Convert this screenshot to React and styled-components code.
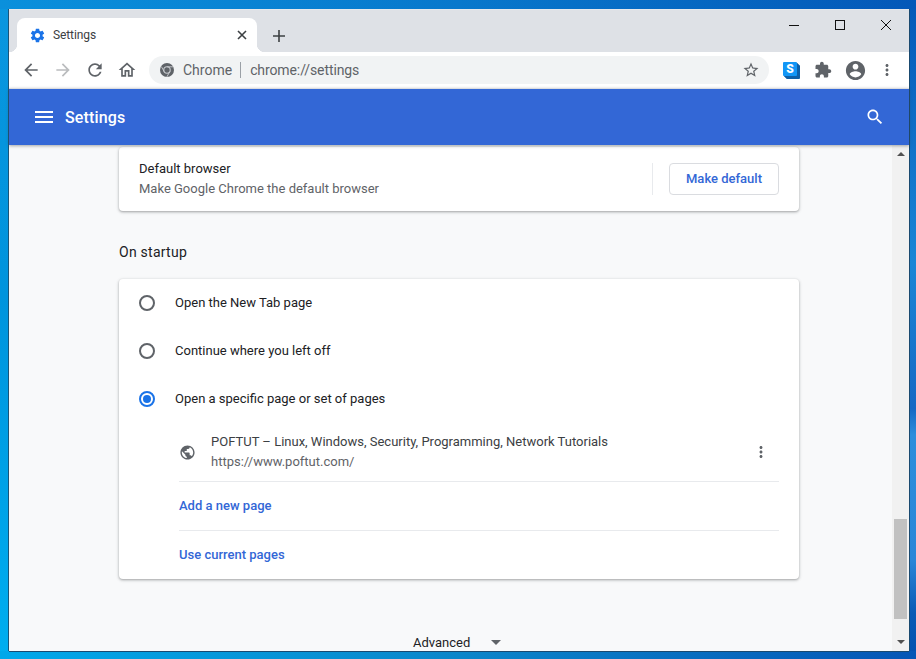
import React from 'react';
import styled, { createGlobalStyle } from 'styled-components';

const Global = createGlobalStyle`
  html, body { margin: 0; padding: 0; height: 659px; overflow: hidden; }
  body {
    background:
      linear-gradient(90deg, #0a90dc 0%, #0878cc 50%, #0458b8 100%) top / 100% 9px no-repeat,
      linear-gradient(90deg, #00a8ea 0%, #0b86ca 50%, #0556b6 100%) bottom / 100% 8px no-repeat,
      linear-gradient(180deg, #0a96df 0%, #0094dd 45%, #00aef0 100%) left / 9px 100% no-repeat,
      linear-gradient(180deg, #0458b8 0%, #1a86d6 40%, #1668c4 62%, #2c8edc 66%, #2a86d8 85%, #0a5ab5 93%, #0350b0 100%) right / 7px 100% no-repeat,
      #0878cc;
    font-family: Roboto, "Liberation Sans", sans-serif;
  }
  * { box-sizing: border-box; }
`;

const Desktop = styled.div`
  width: 916px;
  height: 659px;
  padding: 9px 7px 8px 9px;
`;
const Win = styled.div`
  width: 900px;
  height: 642px;
  display: flex;
  flex-direction: column;
  background: #fff;
  box-shadow: -1px 0 0 #1a5478, 1px 0 0 #1a4a70, 0 1px 0 #1a4a70;
`;
const TabStrip = styled.div`
  height: 43px;
  flex: none;
  display: flex;
  padding-left: 8px;
  background: #dee1e6;
  border-top: 1px solid #e6e8ec;
`;
const Tab = styled.div`
  position: relative;
  width: 240px;
  height: 34px;
  margin-top: 8px;
  display: flex;
  align-items: center;
  padding: 0 10px 0 12px;
  background: #fff;
  border-radius: 8px 8px 0 0;
  &::before, &::after {
    content: '';
    position: absolute;
    bottom: 0;
    width: 8px;
    height: 8px;
  }
  &::before { left: -8px; background: radial-gradient(circle at 0 0, transparent 8px, #fff 8.5px); }
  &::after { right: -8px; background: radial-gradient(circle at 100% 0, transparent 8px, #fff 8.5px); }
`;
const TabTitle = styled.span`
  flex: 1;
  margin-left: 7px;
  font-size: 12px;
  letter-spacing: -0.1px;
  color: #3c4043;
`;
const PlusButton = styled.div`
  width: 28px;
  height: 28px;
  margin: 12px 0 0 8px;
  display: flex;
  align-items: center;
  justify-content: center;
`;
const Spacer = styled.div`
  flex: 1;
`;
const WinButton = styled.div`
  width: 46px;
  height: 30px;
  display: flex;
  align-items: center;
  justify-content: center;
`;
const Toolbar = styled.div`
  height: 36px;
  flex: none;
  display: flex;
  align-items: center;
  padding: 0 6px;
  background: #fff;
`;
const ToolButton = styled.div`
  width: 32px;
  height: 32px;
  display: flex;
  align-items: center;
  justify-content: center;
`;
const Omnibox = styled.div`
  flex: 1;
  height: 28px;
  margin: 0 6px;
  padding: 0 9px 0 10px;
  display: flex;
  align-items: center;
  background: #f1f3f4;
  border-radius: 14px;
  font-size: 14px;
  color: #5f6368;
`;
const Origin = styled.span`
  margin-left: 8px;
`;
const UrlDivider = styled.span`
  width: 1px;
  height: 16px;
  margin: 0 9px 0 8px;
  background: #9aa0a6;
`;
const Url = styled.span`
  flex: 1;
  letter-spacing: -0.1px;
`;
const Header = styled.div`
  position: relative;
  z-index: 2;
  height: 57px;
  flex: none;
  display: flex;
  align-items: center;
  padding: 0 24px 1px 23px;
  background: #3367d6;
  border-top: 1px solid #dadce0;
  box-shadow: 0 1px 3px rgba(60, 64, 67, 0.45);
  color: #fff;
`;
const HeaderTitle = styled.div`
  flex: 1;
  margin-left: 9px;
  padding-top: 1px;
  font-size: 16px;
  font-weight: 500;
  letter-spacing: 0.15px;
`;
const Body = styled.div`
  flex: 1;
  min-height: 0;
  display: flex;
`;
const Content = styled.div`
  flex: 1;
  min-width: 0;
  padding: 2px 93px 0 110px;
  background: #f8f9fa;
  overflow: hidden;
`;
const Card = styled.div`
  background: #fff;
  border-radius: 4px;
  box-shadow: 0 1px 2px rgba(60, 64, 67, 0.3), 0 1px 3px 1px rgba(60, 64, 67, 0.15);
`;
const DefaultRow = styled.div`
  height: 64px;
  display: flex;
  align-items: center;
  padding: 0 20px;
`;
const DefaultText = styled.div`
  flex: 1;
`;
const Primary = styled.div`
  font-size: 13px;
  line-height: 20px;
  color: #202124;
`;
const Secondary = styled.div`
  font-size: 13px;
  line-height: 20px;
  color: #5f6368;
`;
const VDivider = styled.div`
  width: 1px;
  height: 32px;
  margin-right: 16px;
  background: #e8eaed;
`;
const OutlineButton = styled.div`
  width: 110px;
  height: 32px;
  padding-bottom: 2px;
  display: flex;
  align-items: center;
  justify-content: center;
  border: 1px solid #dadce0;
  border-radius: 4px;
  font-size: 13px;
  font-weight: 500;
  color: #3367d6;
`;
const SectionTitle = styled.div`
  margin: 31px 0 17px;
  height: 20px;
  line-height: 20px;
  font-size: 14px;
  font-weight: 400;
  letter-spacing: 0.25px;
  color: #202124;
`;
const RadioRow = styled.div`
  height: 48px;
  display: flex;
  align-items: center;
  padding: 0 20px;
  font-size: 13px;
  color: #202124;
`;
const RadioLabel = styled.span`
  padding-bottom: 2px;
`;
const Radio = styled.span`
  width: 16px;
  height: 16px;
  margin-right: 20px;
  border-radius: 50%;
  border: 2px solid ${p => (p.$on ? '#1a73e8' : '#5f6368')};
  display: flex;
  align-items: center;
  justify-content: center;
  &::after {
    content: '';
    display: ${p => (p.$on ? 'block' : 'none')};
    width: 8px;
    height: 8px;
    border-radius: 50%;
    background: #1a73e8;
  }
`;
const PagesList = styled.div`
  margin: 0 20px 0 60px;
`;
const PageRow = styled.div`
  height: 59px;
  display: flex;
  align-items: center;
  border-bottom: 1px solid #e8eaed;
`;
const PageIcon = styled.div`
  width: 16px;
  height: 17px;
  margin-right: 16px;
`;
const PageText = styled.div`
  flex: 1;
`;
const PageTitle = styled.div`
  font-size: 13px;
  line-height: 20px;
  color: #3c4043;
`;
const PageUrl = styled.div`
  font-size: 13px;
  line-height: 20px;
  color: #5f6368;
`;
const MoreButton = styled.div`
  width: 36px;
  height: 36px;
  display: flex;
  align-items: center;
  justify-content: center;
`;
const LinkRow = styled.div`
  height: ${p => p.$h}px;
  padding-bottom: 2px;
  display: flex;
  align-items: center;
  font-size: 13px;
  font-weight: 500;
  color: #3367d6;
  border-bottom: ${p => (p.$line ? '1px solid #e8eaed' : 'none')};
`;
const Advanced = styled.div`
  margin-top: 53px;
  display: flex;
  align-items: center;
  height: 20px;
  padding-left: 294px;
  font-size: 13px;
  color: #202124;
`;
const Caret = styled.span`
  margin-left: 21px;
  width: 0;
  height: 0;
  border-left: 5px solid transparent;
  border-right: 5px solid transparent;
  border-top: 5px solid #5f6368;
`;
const ScrollBar = styled.div`
  width: 17px;
  flex: none;
  display: flex;
  flex-direction: column;
  align-items: center;
  background: #f1f1f1;
`;
const ArrowUp = styled.div`
  margin-top: 7px;
  width: 0;
  height: 0;
  border-left: 4px solid transparent;
  border-right: 4px solid transparent;
  border-bottom: 4px solid #505050;
`;
const Thumb = styled.div`
  width: 13px;
  height: 100px;
  margin-top: 363px;
  background: #c1c1c1;
`;
const ArrowDown = styled.div`
  margin-top: 21px;
  width: 0;
  height: 0;
  border-left: 4px solid transparent;
  border-right: 4px solid transparent;
  border-top: 4px solid #505050;
`;
const ExtIcon = styled.div`
  width: 14px;
  height: 14px;
  margin: 0 2px 2px 0;
  background: #1296f6;
  border-radius: 1px;
  box-shadow: 1px 1px 0 #0d5fa8, 2px 2px 0 #0d5fa8, 3px 3px 0 #0d5fa8;
  display: flex;
  align-items: center;
  justify-content: center;
  font-size: 12px;
  font-weight: 900;
  color: #fff;
`;

const P = {
  gear: 'M19.14 12.94c.04-.3.06-.61.06-.94 0-.32-.02-.64-.07-.94l2.03-1.58c.18-.14.23-.41.12-.61l-1.92-3.32c-.12-.22-.37-.29-.59-.22l-2.39.96c-.5-.38-1.03-.7-1.62-.94l-.36-2.54c-.04-.24-.24-.41-.48-.41h-3.84c-.24 0-.43.17-.47.41l-.36 2.54c-.59.24-1.13.57-1.62.94l-2.39-.96c-.22-.08-.47 0-.59.22L2.74 8.87c-.12.21-.08.47.12.61l2.03 1.58c-.05.3-.09.63-.09.94s.02.64.07.94l-2.03 1.58c-.18.14-.23.41-.12.61l1.92 3.32c.12.22.37.29.59.22l2.39-.96c.5.38 1.03.7 1.62.94l.36 2.54c.05.24.24.41.48.41h3.84c.24 0 .44-.17.47-.41l.36-2.54c.59-.24 1.13-.56 1.62-.94l2.39.96c.22.08.47 0 .59-.22l1.92-3.32c.12-.22.07-.47-.12-.61l-2.01-1.58zM12 15.6c-1.98 0-3.6-1.62-3.6-3.6s1.62-3.6 3.6-3.6 3.6 1.62 3.6 3.6-1.62 3.6-3.6 3.6z',
  back: 'M20 11H7.83l5.59-5.59L12 4l-8 8 8 8 1.41-1.41L7.83 13H20v-2z',
  forward: 'M4 11h12.17l-5.59-5.59L12 4l8 8-8 8-1.41-1.41L16.17 13H4v-2z',
  reload: 'M17.65 6.35C16.2 4.9 14.21 4 12 4c-4.42 0-7.99 3.58-7.99 8s3.57 8 7.99 8c3.73 0 6.84-2.55 7.73-6h-2.08c-.82 2.33-3.04 4-5.65 4-3.31 0-6-2.69-6-6s2.69-6 6-6c1.66 0 3.14.69 4.22 1.78L13 11h7V4l-2.35 2.35z',
  home: 'M12 5.69l5 4.5V18h-2v-6H9v6H7v-7.81l5-4.5M12 3L2 12h3v8h6v-6h2v6h6v-8h3L12 3z',
  star: 'M22 9.24l-7.19-.62L12 2 9.19 8.63 2 9.24l5.46 4.73L5.82 21 12 17.27 18.18 21l-1.63-7.03L22 9.24zM12 15.4l-3.76 2.27 1-4.28-3.32-2.88 4.38-.38L12 6.1l1.71 4.04 4.38.38-3.32 2.88 1 4.28L12 15.4z',
  puzzle: 'M20.5 11H19V7c0-1.1-.9-2-2-2h-4V3.5C13 2.12 11.88 1 10.5 1S8 2.12 8 3.5V5H4c-1.1 0-1.99.9-1.99 2v3.8H3.5c1.49 0 2.7 1.21 2.7 2.7s-1.21 2.7-2.7 2.7H2V20c0 1.1.9 2 2 2h3.8v-1.5c0-1.49 1.21-2.7 2.7-2.7 1.49 0 2.7 1.21 2.7 2.7V22H17c1.1 0 2-.9 2-2v-4h1.5c1.38 0 2.5-1.12 2.5-2.5S21.88 11 20.5 11z',
  account: 'M12 2C6.48 2 2 6.48 2 12s4.48 10 10 10 10-4.48 10-10S17.52 2 12 2zm0 3c1.66 0 3 1.34 3 3s-1.34 3-3 3-3-1.34-3-3 1.34-3 3-3zm0 14.2c-2.5 0-4.71-1.28-6-3.22.03-1.99 4-3.08 6-3.08 1.99 0 5.97 1.09 6 3.08-1.29 1.94-3.5 3.22-6 3.22z',
  dots: 'M12 8c1.1 0 2-.9 2-2s-.9-2-2-2-2 .9-2 2 .9 2 2 2zm0 2c-1.1 0-2 .9-2 2s.9 2 2 2 2-.9 2-2-.9-2-2-2zm0 6c-1.1 0-2 .9-2 2s.9 2 2 2 2-.9 2-2-.9-2-2-2z',
  globe: 'M12 2C6.48 2 2 6.48 2 12s4.48 10 10 10 10-4.48 10-10S17.52 2 12 2zm-1 17.93c-3.95-.49-7-3.85-7-7.93 0-.62.08-1.21.21-1.79L9 15v1c0 1.1.9 2 2 2v1.93zm6.9-2.54c-.26-.81-1-1.39-1.9-1.39h-1v-3c0-.55-.45-1-1-1H8v-2h2c.55 0 1-.45 1-1V7h2c1.1 0 2-.9 2-2v-.41c2.93 1.19 5 4.06 5 7.41 0 2.08-.8 3.97-2.1 5.39z',
  search: 'M15.5 14h-.79l-.28-.27C15.41 12.59 16 11.11 16 9.5 16 5.91 13.09 3 9.5 3S3 5.91 3 9.5 5.91 16 9.5 16c1.61 0 3.09-.59 4.23-1.57l.27.28v.79l5 4.99L20.49 19l-4.99-5zm-6 0C7.01 14 5 11.99 5 9.5S7.01 5 9.5 5 14 7.01 14 9.5 11.99 14 9.5 14z',
  menu: 'M3 18h18v-2H3v2zm0-5h18v-2H3v2zm0-7v2h18V6H3z',
};

const Icon = ({ d, size = 24, color = '#5f6368' }) => (
  <svg width={size} height={size} viewBox="0 0 24 24" fill={color}><path d={d} /></svg>
);

const ChromeLogo = () => (
  <svg width="16" height="16" viewBox="0 0 16 16">
    <circle cx="8" cy="8" r="7" fill="#5f6368" />
    <circle cx="8" cy="8" r="3.2" fill="#5f6368" stroke="#c9ccd0" strokeWidth="1.1" />
    <path d="M8 4.8h6M5.2 9.6 2.4 4.6M10.8 9.6 7.8 15" stroke="#c9ccd0" strokeWidth="0.9" fill="none" />
  </svg>
);

export default function App() {
  return (
    <Desktop>
      <Global />
      <Win>
        <TabStrip>
          <Tab>
            <Icon d={P.gear} size={17} color="#1a73e8" />
            <TabTitle>Settings</TabTitle>
            <svg width="10" height="10" viewBox="0 0 10 10"><path d="M1 1l8 8M9 1l-8 8" stroke="#3c4043" strokeWidth="1.6" /></svg>
          </Tab>
          <PlusButton>
            <svg width="12" height="12" viewBox="0 0 12 12"><path d="M6 0v12M0 6h12" stroke="#3c4043" strokeWidth="1.6" /></svg>
          </PlusButton>
          <Spacer />
          <WinButton>
            <svg width="10" height="10" viewBox="0 0 10 10"><path d="M0 5.5h10" stroke="#111" strokeWidth="1" /></svg>
          </WinButton>
          <WinButton>
            <svg width="10" height="10" viewBox="0 0 10 10"><rect x=".5" y=".5" width="9" height="9" fill="none" stroke="#111" strokeWidth="1" /></svg>
          </WinButton>
          <WinButton>
            <svg width="10" height="10" viewBox="0 0 10 10"><path d="M0 0l10 10M10 0L0 10" stroke="#111" strokeWidth="1" /></svg>
          </WinButton>
        </TabStrip>
        <Toolbar>
          <ToolButton><Icon d={P.back} size={20} /></ToolButton>
          <ToolButton><Icon d={P.forward} size={20} color="#babcbe" /></ToolButton>
          <ToolButton><Icon d={P.reload} size={20} /></ToolButton>
          <ToolButton><Icon d={P.home} size={20} /></ToolButton>
          <Omnibox>
            <ChromeLogo />
            <Origin>Chrome</Origin>
            <UrlDivider />
            <Url>chrome://settings</Url>
            <Icon d={P.star} size={18} />
          </Omnibox>
          <ToolButton><ExtIcon>S</ExtIcon></ToolButton>
          <ToolButton><Icon d={P.puzzle} size={18} /></ToolButton>
          <ToolButton><Icon d={P.account} size={23} /></ToolButton>
          <ToolButton><Icon d={P.dots} size={18} /></ToolButton>
        </Toolbar>
        <Header>
          <Icon d={P.menu} size={24} color="#fff" />
          <HeaderTitle>Settings</HeaderTitle>
          <Icon d={P.search} size={20} color="#fff" />
        </Header>
        <Body>
          <Content>
            <Card>
              <DefaultRow>
                <DefaultText>
                  <Primary>Default browser</Primary>
                  <Secondary>Make Google Chrome the default browser</Secondary>
                </DefaultText>
                <VDivider />
                <OutlineButton>Make default</OutlineButton>
              </DefaultRow>
            </Card>
            <SectionTitle>On startup</SectionTitle>
            <Card>
              <RadioRow><Radio /><RadioLabel>Open the New Tab page</RadioLabel></RadioRow>
              <RadioRow><Radio /><RadioLabel>Continue where you left off</RadioLabel></RadioRow>
              <RadioRow><Radio $on /><RadioLabel>Open a specific page or set of pages</RadioLabel></RadioRow>
              <PagesList>
                <PageRow>
                  <PageIcon><Icon d={P.globe} size={17} /></PageIcon>
                  <PageText>
                    <PageTitle>POFTUT – Linux, Windows, Security, Programming, Network Tutorials</PageTitle>
                    <PageUrl>https://www.poftut.com/</PageUrl>
                  </PageText>
                  <MoreButton><Icon d={P.dots} size={18} /></MoreButton>
                </PageRow>
                <LinkRow $h={49} $line>Add a new page</LinkRow>
                <LinkRow $h={48}>Use current pages</LinkRow>
              </PagesList>
            </Card>
            <Advanced>Advanced<Caret /></Advanced>
          </Content>
          <ScrollBar>
            <ArrowUp />
            <Thumb />
            <ArrowDown />
          </ScrollBar>
        </Body>
      </Win>
    </Desktop>
  );
}
